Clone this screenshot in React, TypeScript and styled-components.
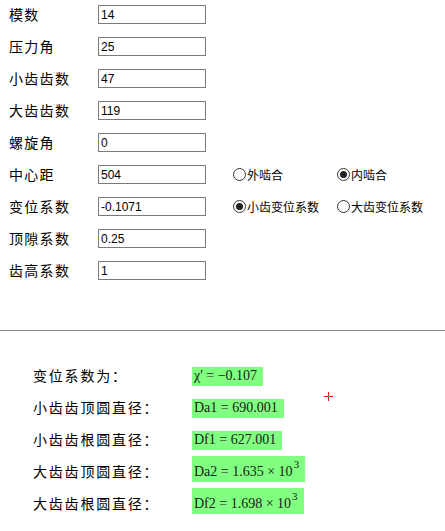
import { createGlobalStyle, styled } from "styled-components";

const GlobalStyle = createGlobalStyle`
  html, body {
    margin: 0;
    padding: 0;
    background: #ffffff;
  }
  body {
    font-family: "Noto Sans CJK SC", "Liberation Sans", sans-serif;
    color: #000;
  }
`;

const Page = styled.div`
  position: relative;
  width: 445px;
  height: 531px;
  overflow: hidden;
`;

const Form = styled.div`
  padding: 5px 0 0 9px;
  display: flex;
  flex-direction: column;
  gap: 13px;
`;

const Row = styled.div`
  display: grid;
  grid-template-columns: 89px 108px 27px 104px auto;
  align-items: center;
  height: 19px;
`;

const Label = styled.span`
  font-size: 14px;
  letter-spacing: 1.3px;
  line-height: 19px;
`;

const Field = styled.input`
  box-sizing: border-box;
  width: 108px;
  height: 19px;
  margin: 0;
  padding: 0 2px;
  border: 1px solid #7a7a7a;
  font-family: "Liberation Sans", Arial, sans-serif;
  font-size: 12px;
  color: #000;
  outline: none;
`;

const RadioItem = styled.label`
  display: flex;
  align-items: center;
  gap: 1px;
  font-size: 12px;
  line-height: 19px;
  white-space: nowrap;
`;

const RadioDot = styled.span<{ $checked?: boolean }>`
  box-sizing: border-box;
  width: 13px;
  height: 13px;
  border-radius: 50%;
  border: 1px solid #333;
  display: flex;
  align-items: center;
  justify-content: center;

  &::after {
    content: "";
    width: 7px;
    height: 7px;
    border-radius: 50%;
    background: ${(p) => (p.$checked ? "#222" : "transparent")};
  }
`;

const Divider = styled.div`
  margin-top: 50px;
  height: 1px;
  background: #888;
`;

const Results = styled.div`
  padding: 29px 0 0 33px;
  display: flex;
  flex-direction: column;
`;

const ResultRow = styled.div`
  display: grid;
  grid-template-columns: 159px auto;
  align-items: end;
  height: 32px;
  padding-bottom: 6px;
  box-sizing: border-box;
`;

const ResultLabel = styled.span`
  font-size: 14px;
  letter-spacing: 1.8px;
  line-height: 19px;
  padding-bottom: 1px;
`;

const Value = styled.span<{ $tall?: boolean }>`
  justify-self: start;
  box-sizing: border-box;
  height: ${(p) => (p.$tall ? 26 : 19)}px;
  display: flex;
  align-items: flex-end;
  background: #80ff80;
  padding: 0 6px 2px 2px;
  font-family: "Liberation Serif", "Times New Roman", serif;
  font-size: 14px;
  line-height: 16px;
  color: #1a1a1a;

  sup {
    font-size: 11px;
    line-height: 11px;
    align-self: flex-start;
    margin: 3px 0 0 1px;
  }
`;

const Cursor = styled.svg`
  position: absolute;
  left: 324px;
  top: 392px;
`;

function Radio({ label, checked }: { label: string; checked?: boolean }) {
  return (
    <RadioItem>
      <RadioDot $checked={checked} />
      {label}
    </RadioItem>
  );
}

const fields = [
  { label: "模数", value: "14" },
  { label: "压力角", value: "25" },
  { label: "小齿齿数", value: "47" },
  { label: "大齿齿数", value: "119" },
  { label: "螺旋角", value: "0" },
  { label: "中心距", value: "504", radios: [{ label: "外啮合" }, { label: "内啮合", checked: true }] },
  {
    label: "变位系数",
    value: "-0.1071",
    radios: [{ label: "小齿变位系数", checked: true }, { label: "大齿变位系数" }],
  },
  { label: "顶隙系数", value: "0.25" },
  { label: "齿高系数", value: "1" },
];

export default function App() {
  return (
    <Page>
      <GlobalStyle />
      <Form>
        {fields.map((f) => (
          <Row key={f.label}>
            <Label>{f.label}</Label>
            <Field defaultValue={f.value} />
            <span />
            {f.radios?.map((r) => (
              <Radio key={r.label} label={r.label} checked={r.checked} />
            ))}
          </Row>
        ))}
      </Form>
      <Divider />
      <Results>
        <ResultRow>
          <ResultLabel>变位系数为：</ResultLabel>
          <Value>χ' = −0.107</Value>
        </ResultRow>
        <ResultRow>
          <ResultLabel>小齿齿顶圆直径：</ResultLabel>
          <Value>Da1 = 690.001</Value>
        </ResultRow>
        <ResultRow>
          <ResultLabel>小齿齿根圆直径：</ResultLabel>
          <Value>Df1 = 627.001</Value>
        </ResultRow>
        <ResultRow>
          <ResultLabel>大齿齿顶圆直径：</ResultLabel>
          <Value $tall>
            Da2 = 1.635 × 10<sup>3</sup>
          </Value>
        </ResultRow>
        <ResultRow>
          <ResultLabel>大齿齿根圆直径：</ResultLabel>
          <Value $tall>
            Df2 = 1.698 × 10<sup>3</sup>
          </Value>
        </ResultRow>
      </Results>
      <Cursor width="9" height="9" viewBox="0 0 9 9">
        <path d="M4.5 0v9M0 4.5h9" stroke="#ff0000" strokeWidth="1" />
        <rect x="4" y="4" width="1" height="1" fill="#00c0ff" />
      </Cursor>
    </Page>
  );
}
